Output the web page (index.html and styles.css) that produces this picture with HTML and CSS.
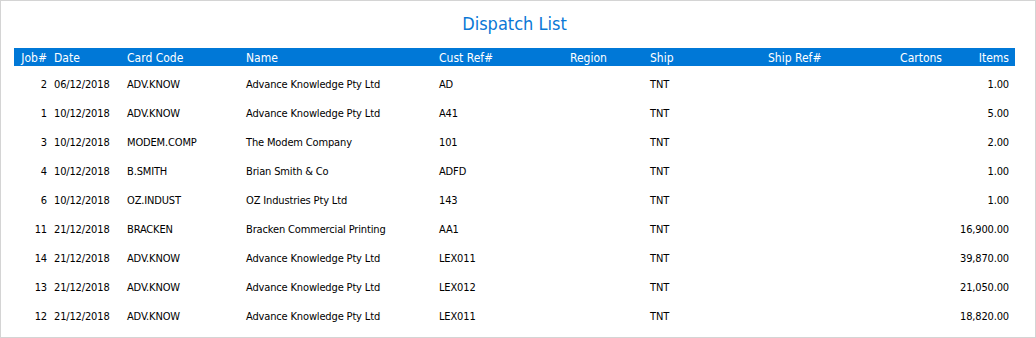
FILE: index.html
```html
<!DOCTYPE html>
<html>
<head>
<meta charset="utf-8">
<title>Dispatch List</title>
<link rel="stylesheet" href="styles.css">
</head>
<body>
<div class="panel">
  <h1 class="title">Dispatch List</h1>
  <div class="list">
    <div class="row head">
      <span class="c num">Job#</span><span class="c">Date</span><span class="c">Card Code</span><span class="c">Name</span><span class="c">Cust Ref#</span><span class="c">Region</span><span class="c">Ship</span><span class="c">Ship Ref#</span><span class="c num cartons">Cartons</span><span class="c num items">Items</span>
    </div>
    <div class="row">
      <span class="c num">2</span><span class="c">06/12/2018</span><span class="c">ADV.KNOW</span><span class="c">Advance Knowledge Pty Ltd</span><span class="c">AD</span><span class="c"></span><span class="c">TNT</span><span class="c"></span><span class="c num cartons"></span><span class="c num items">1.00</span>
    </div>
    <div class="row">
      <span class="c num">1</span><span class="c">10/12/2018</span><span class="c">ADV.KNOW</span><span class="c">Advance Knowledge Pty Ltd</span><span class="c">A41</span><span class="c"></span><span class="c">TNT</span><span class="c"></span><span class="c num cartons"></span><span class="c num items">5.00</span>
    </div>
    <div class="row">
      <span class="c num">3</span><span class="c">10/12/2018</span><span class="c">MODEM.COMP</span><span class="c">The Modem Company</span><span class="c">101</span><span class="c"></span><span class="c">TNT</span><span class="c"></span><span class="c num cartons"></span><span class="c num items">2.00</span>
    </div>
    <div class="row">
      <span class="c num">4</span><span class="c">10/12/2018</span><span class="c">B.SMITH</span><span class="c">Brian Smith &amp; Co</span><span class="c">ADFD</span><span class="c"></span><span class="c">TNT</span><span class="c"></span><span class="c num cartons"></span><span class="c num items">1.00</span>
    </div>
    <div class="row">
      <span class="c num">6</span><span class="c">10/12/2018</span><span class="c">OZ.INDUST</span><span class="c">OZ Industries Pty Ltd</span><span class="c">143</span><span class="c"></span><span class="c">TNT</span><span class="c"></span><span class="c num cartons"></span><span class="c num items">1.00</span>
    </div>
    <div class="row">
      <span class="c num">11</span><span class="c">21/12/2018</span><span class="c">BRACKEN</span><span class="c">Bracken Commercial Printing</span><span class="c">AA1</span><span class="c"></span><span class="c">TNT</span><span class="c"></span><span class="c num cartons"></span><span class="c num items">16,900.00</span>
    </div>
    <div class="row">
      <span class="c num">14</span><span class="c">21/12/2018</span><span class="c">ADV.KNOW</span><span class="c">Advance Knowledge Pty Ltd</span><span class="c">LEX011</span><span class="c"></span><span class="c">TNT</span><span class="c"></span><span class="c num cartons"></span><span class="c num items">39,870.00</span>
    </div>
    <div class="row">
      <span class="c num">13</span><span class="c">21/12/2018</span><span class="c">ADV.KNOW</span><span class="c">Advance Knowledge Pty Ltd</span><span class="c">LEX012</span><span class="c"></span><span class="c">TNT</span><span class="c"></span><span class="c num cartons"></span><span class="c num items">21,050.00</span>
    </div>
    <div class="row">
      <span class="c num">12</span><span class="c">21/12/2018</span><span class="c">ADV.KNOW</span><span class="c">Advance Knowledge Pty Ltd</span><span class="c">LEX011</span><span class="c"></span><span class="c">TNT</span><span class="c"></span><span class="c num cartons"></span><span class="c num items">18,820.00</span>
    </div>
  </div>
</div>
</body>
</html>
```

FILE: styles.css
```css
html, body {
  margin: 0;
  padding: 0;
  background: #ffffff;
}

body {
  font-family: "DejaVu Sans Condensed", "DejaVu Sans", "Liberation Sans", sans-serif;
  font-stretch: condensed;
  font-size: 11px;
  color: #000000;
}

.panel {
  box-sizing: border-box;
  width: 1036px;
  height: 338px;
  border: 1px solid #d4d4d4;
  padding: 11px 20px 0 13px;
  overflow: hidden;
}

.title {
  margin: 0 0 12px 0;
  font-size: 18px;
  line-height: 24px;
  font-weight: normal;
  color: #0a78d6;
  text-align: center;
}

.list {
  display: flex;
  flex-direction: column;
}

.row {
  display: grid;
  grid-template-columns: 36px 73px 119px 193px 131px 80px 118px 116px 65px 70px;
  height: 29px;
  line-height: 29px;
  white-space: nowrap;
  letter-spacing: -0.15px;
}

.row.head {
  box-sizing: border-box;
  height: 18px;
  line-height: 18px;
  padding-top: 1px;
  font-size: 12px;
  letter-spacing: 0;
  background: #0078d7;
  color: #ffffff;
  margin-bottom: 4px;
}

.c {
  padding: 0 4px;
  overflow: hidden;
}

.num {
  text-align: right;
  padding: 0 3px 0 0;
}

.cartons {
  padding-right: 3px;
}

.items {
  padding-right: 6px;
}
```
